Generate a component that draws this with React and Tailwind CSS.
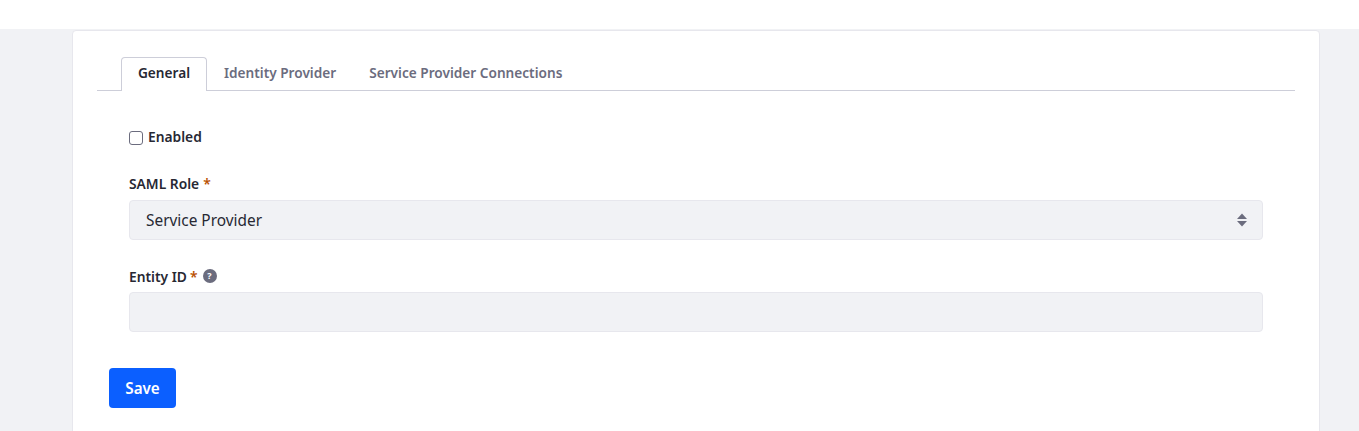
const App = () => {
  return (
    <div className="h-[431px] overflow-hidden bg-[#f1f2f5] text-[#272833] font-['Noto_Sans','Open_Sans',sans-serif]">

      {/* Top bar */}
      <div className="h-[29px] bg-white"></div>

      {/* Card */}
      <div className="ml-[72px] mt-px h-[420px] w-[1248px] rounded-t-[4px] border border-[#e7e7ed] bg-white px-[24px] pt-[26px]">

        {/* Tabs */}
        <div className="flex h-[34px] items-end border-b border-[#cdced9] pl-[24px] text-[13.65px] font-semibold">
          <div className="relative top-px flex h-[34px] w-[86px] items-center justify-center rounded-t-[4px] border border-b-0 border-[#cdced9] bg-white pb-[2px]">
            General
          </div>
          <div className="flex h-[33px] items-center pl-[17px] pr-[16px] text-[#6b6c7e]">
            Identity Provider
          </div>
          <div className="flex h-[33px] items-center px-[17px] text-[#6b6c7e]">
            Service Provider Connections
          </div>
        </div>

        {/* Form */}
        <div className="px-[32px]">
          <label className="mt-[37px] flex h-[20px] items-center gap-[5px] text-[13.8px] font-semibold">
            <span className="h-[14px] w-[14px] rounded-[3px] border border-[#6b6c7e] bg-white"></span>
            <span className="pb-[1px]">Enabled</span>
          </label>

          <div className="mt-[26px] flex h-[20px] items-center gap-[4px] text-[13.8px] font-semibold">
            SAML Role
            <span className="text-[#b95000]">*</span>
          </div>
          <div className="mt-[6px] flex h-[40px] items-center justify-between rounded-[4px] border border-[#e7e7ed] bg-[#f1f2f5] pl-[16px] pr-[14px] pt-[2px] text-[15.4px]">
            Service Provider
            <svg className="relative -top-px" width="12" height="16" viewBox="0 0 12 16" fill="#6b6c7e">
              <path d="M6 1.5 11 7H1z" />
              <path d="M6 14.5 1 9h10z" />
            </svg>
          </div>

          <div className="mt-[26px] flex h-[20px] items-center gap-[3px] pt-[2px] text-[13.8px] font-semibold">
            Entity ID
            <span className="text-[#b95000]">*</span>
            <span className="relative -top-px ml-[2px] flex h-[14px] w-[14px] items-center justify-center rounded-full bg-[#6b6c7e] text-[9px] font-bold text-white">
              ?
            </span>
          </div>
          <div className="mt-[6px] h-[40px] rounded-[4px] border border-[#e7e7ed] bg-[#f1f2f5]"></div>
        </div>

        <button className="ml-[12px] mt-[36px] h-[40px] w-[67px] rounded-[4px] bg-[#0b5fff] text-[15.2px] font-semibold text-white">
          Save
        </button>
      </div>
    </div>
  );
};

export default App;
